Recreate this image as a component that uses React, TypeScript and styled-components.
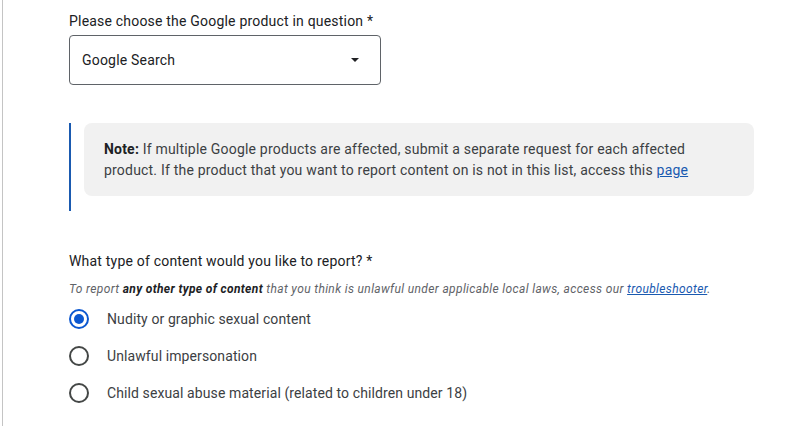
import React from "react";
import styled, { createGlobalStyle } from "styled-components";

const Global = createGlobalStyle`
  html, body { margin: 0; padding: 0; background: #fff; }
  body { font-family: Roboto, "Noto Sans", Arial, sans-serif; color: #202124; }
`;

const Page = styled.div`
  margin-left: 2px;
  border-left: 1px solid #c4c4c4;
  min-height: 426px;
  box-sizing: border-box;
  padding: 11px 20px 0 66px;
  display: flex;
  flex-direction: column;
  align-items: flex-start;
`;

const Label = styled.div`
  font-size: 14px;
  line-height: 20px;
  letter-spacing: 0.2px;
  color: #202124;
`;

const Select = styled.div`
  margin-top: 4px;
  width: 312px;
  height: 50px;
  box-sizing: border-box;
  border: 1px solid #5f6368;
  border-radius: 4px;
  display: flex;
  align-items: center;
  justify-content: space-between;
  padding: 0 21px 0 12px;
  font-size: 14px;
  letter-spacing: 0.2px;
  color: #202124;
`;

const Arrow = styled.span`
  width: 0;
  height: 0;
  border-left: 4px solid transparent;
  border-right: 4px solid transparent;
  border-top: 4px solid #202124;
`;

const Callout = styled.div`
  margin-top: 38px;
  border-left: 2px solid #1a5ab0;
  padding: 0 0 15px 13px;
`;

const NoteBox = styled.div`
  background: #f1f1f1;
  border-radius: 8px;
  padding: 16px 20px 15px 20px;
  width: 670px;
  box-sizing: border-box;
  font-size: 14px;
  line-height: 21px;
  letter-spacing: 0.2px;
  color: #3c4043;
  b { color: #202124; font-weight: 700; }
`;

const Link = styled.a`
  color: #1a5ab0;
  text-decoration: underline;
`;

const Question = styled(Label)`
  margin-top: 40px;
`;

const Help = styled.div`
  margin-top: 10px;
  font-size: 12px;
  line-height: 16px;
  letter-spacing: 0.36px;
  font-style: italic;
  color: #5f6368;
  white-space: nowrap;
  b { color: #202124; font-weight: 700; }
`;

const RadioList = styled.div`
  margin-top: 3px;
  display: flex;
  flex-direction: column;
`;

const RadioRow = styled.label`
  height: 37px;
  display: flex;
  align-items: center;
  gap: 18px;
  font-size: 14px;
  letter-spacing: 0.1px;
  color: #3c4043;
`;

const Circle = styled.span<{ $on?: boolean }>`
  width: 20px;
  height: 20px;
  box-sizing: border-box;
  border-radius: 50%;
  border: 2px solid ${(p) => (p.$on ? "#0b57d0" : "#444746")};
  display: flex;
  align-items: center;
  justify-content: center;
  &::after {
    content: "";
    width: 10px;
    height: 10px;
    border-radius: 50%;
    background: ${(p) => (p.$on ? "#0b57d0" : "transparent")};
  }
`;

const options = [
  "Nudity or graphic sexual content",
  "Unlawful impersonation",
  "Child sexual abuse material (related to children under 18)",
];

export default function App() {
  return (
    <>
      <Global />
      <Page>
        <Label>Please choose the Google product in question *</Label>
        <Select>
          <span>Google Search</span>
          <Arrow />
        </Select>
        <Callout>
          <NoteBox>
            <b>Note:</b> If multiple Google products are affected, submit a separate request for each affected
            product. If the product that you want to report content on is not in this list, access this{" "}
            <Link href="#">page</Link>
          </NoteBox>
        </Callout>
        <Question>What type of content would you like to report? *</Question>
        <Help>
          To report <b>any other type of content</b> that you think is unlawful under applicable local laws, access our{" "}
          <Link href="#">troubleshooter</Link>.
        </Help>
        <RadioList>
          {options.map((o, i) => (
            <RadioRow key={o}>
              <Circle $on={i === 0} />
              <span>{o}</span>
            </RadioRow>
          ))}
        </RadioList>
      </Page>
    </>
  );
}
